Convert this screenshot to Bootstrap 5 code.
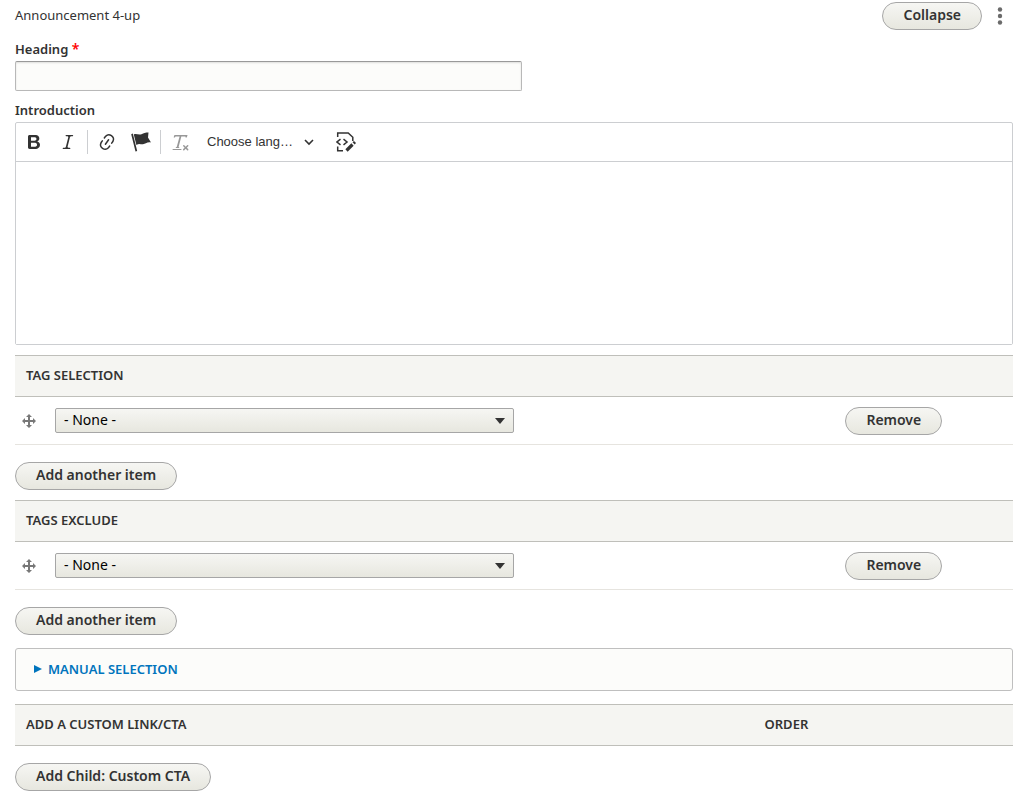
<!DOCTYPE html>
<html lang="en">
<head>
<meta charset="utf-8">
<meta name="viewport" content="width=device-width, initial-scale=1">
<title>Announcement 4-up</title>
<link href="https://cdn.jsdelivr.net/npm/bootstrap@5.3.0/dist/css/bootstrap.min.css" rel="stylesheet">
<style>
  body { font-family: "Noto Sans", "Open Sans", sans-serif; font-size: 13px; line-height: 20px; color: #333; }
  .page { padding: 2px 14px 16px 15px; }
  .page-head { padding-right: 3px; }
  .title-text { padding-bottom: 2px; }
  .field-block { margin-top: 9px; }
  .field-label { display: block; margin-bottom: 2px; font-weight: 600; line-height: 20px; }
  .required-mark { color: #f00; font-size: 14px; line-height: 16px; }
  .pill { display: block; width: fit-content; height: 28px; padding: 0 20px 2px; border: 1px solid #a6a6a6; border-radius: 14px; background: linear-gradient(#f6f6f3, #e7e7df); color: #333; font-size: 14px; font-weight: 600; line-height: 24px; }
  .pill:hover { background: #f9f8f6; color: #1a1a1a; }
  .add-item { margin-top: 17px; }
  .more-btn { width: 20px; height: 28px; }
  .text-field { width: 100%; max-width: 507px; height: 30px; border: 1px solid #b8b8b8; border-top-color: #999; border-radius: 2px; background: #fcfcfa; box-shadow: inset 0 1px 2px rgba(0,0,0,.12); padding: 4px 8px; }
  .editor { border: 1px solid #ccced1; border-radius: 2px; }
  .editor-bar { height: 39px; padding: 0 4px; border-bottom: 1px solid #ccced1; }
  .tool { width: 28px; height: 28px; }
  .tool + .tool { margin-left: 6px; }
  .tool:disabled { opacity: .5; }
  .tool svg { width: 20px; height: 20px; }
  .tool-sep { width: 1px; height: 24px; margin: 0 5px; background: #ccced1; }
  .lang-pick { appearance: none; width: 123px; height: 28px; margin: 0 10px 0 5px; border: 0; padding: 0 24px 2px 8px; color: #333; font: 13px "Liberation Sans", sans-serif; background: url("data:image/svg+xml,%3Csvg xmlns='http://www.w3.org/2000/svg' viewBox='0 0 10 10'%3E%3Cpath d='M1 3l4 4 4-4' fill='none' stroke='%23333' stroke-width='1.6'/%3E%3C/svg%3E") no-repeat right 8px center / 10px; }
  .editor-text { display: block; width: 100%; height: 182px; border: 0; resize: none; padding: 8px; }
  .field-table { width: 100%; margin-top: 10px; table-layout: fixed; border-collapse: collapse; }
  .field-table th { height: 41px; padding: 0 11px 2px; border-top: 1px solid #bfbfba; border-bottom: 1px solid #bfbfba; background: #f5f5f2; font-weight: 600; text-transform: uppercase; }
  .field-table td { height: 48px; padding: 0 12px; border-bottom: 1px solid #e6e4df; vertical-align: middle; }
  .field-table td.handle { padding: 0 7px; }
  .field-table td.choice { padding: 0; }
  .col-handle { width: 40px; }
  .col-action { width: 18%; }
  .col-order { width: 26%; }
  .tag-select { appearance: none; display: block; width: 59%; height: 25px; padding: 0 24px 2px 8px; border: 1px solid #a6a6a6; border-radius: 2px; color: #000; font-size: 14px; line-height: 20px; background: url("data:image/svg+xml,%3Csvg xmlns='http://www.w3.org/2000/svg' viewBox='0 0 10 6'%3E%3Cpath d='M0 0h10L5 6z' fill='%23333'/%3E%3C/svg%3E") no-repeat right 8px center / 10px 6px, linear-gradient(#f6f6f3, #e7e7df); }
  .manual { margin: 13px 0; border: 1px solid #bfbfbf; border-radius: 3px; background: #fcfcfa; }
  .manual summary { list-style: none; height: 41px; padding: 0 18px 2px; gap: 6px; color: #0074bd; font-weight: 600; text-transform: uppercase; }
</style>
</head>
<body>
<main class="page">
  <header class="page-head d-flex align-items-center justify-content-between">
    <span class="title-text">Announcement 4-up</span>
    <div class="d-flex align-items-center gap-2">
      <button type="button" class="pill">Collapse</button>
      <button type="button" class="more-btn btn p-0 border-0 d-flex align-items-center justify-content-center" aria-label="More actions">
        <svg width="6" height="20" viewBox="0 0 6 20" fill="#6b6b6b"><circle cx="3" cy="3.500" r="2.200"/><circle cx="3" cy="10" r="2.200"/><circle cx="3" cy="16.500" r="2.200"/></svg>
      </button>
    </div>
  </header>

  <div class="field-block">
    <label class="field-label" for="heading">Heading <span class="required-mark">*</span></label>
    <input id="heading" class="text-field d-block" type="text" required>
  </div>

  <div class="field-block">
    <label class="field-label" for="intro">Introduction</label>
    <div class="editor">
      <div class="editor-bar d-flex align-items-center" role="toolbar" aria-label="Editor toolbar">
        <button type="button" class="tool btn p-0 border-0 d-flex align-items-center justify-content-center" aria-label="Bold"><svg viewBox="0 0 20 20" fill="#333"><path d="M10.187 17H5.773c-.637 0-1.092-.138-1.364-.415-.273-.277-.409-.718-.409-1.323V4.738c0-.617.14-1.062.419-1.332.279-.27.73-.406 1.354-.406h4.68c.69 0 1.288.041 1.793.124.506.083.96.242 1.36.478.341.197.644.447.906.75a3.262 3.262 0 0 1 .808 2.162c0 1.401-.722 2.426-2.167 3.075C15.05 10.175 16 11.315 16 13.01a3.756 3.756 0 0 1-2.296 3.504 6.1 6.1 0 0 1-1.517.377c-.571.073-1.238.11-2 .11zm-.217-6.217H7v4.087h3.069c1.977 0 2.965-.69 2.965-2.072 0-.707-.256-1.22-.768-1.537-.512-.319-1.277-.478-2.296-.478zM7 5.13v3.619h2.606c.729 0 1.292-.067 1.69-.2a1.6 1.6 0 0 0 .91-.765c.165-.267.247-.566.247-.897 0-.707-.26-1.176-.778-1.409-.519-.232-1.31-.348-2.375-.348H7z"/></svg></button>
        <button type="button" class="tool btn p-0 border-0 d-flex align-items-center justify-content-center" aria-label="Italic"><svg viewBox="0 0 20 20" fill="#333"><path d="m9.586 14.633.021.004c-.036.335.095.655.393.962.082.083.173.15.274.201h1.474a.6.6 0 1 1 0 1.2H5.304a.6.6 0 0 1 0-1.2h1.15c.474-.07.809-.182 1.005-.334.157-.122.291-.32.404-.597l2.416-9.55a1.053 1.053 0 0 0-.281-.823 1.12 1.12 0 0 0-.442-.296H8.15a.6.6 0 0 1 0-1.2h6.443a.6.6 0 1 1 0 1.2h-1.195c-.376.056-.65.155-.823.296-.215.175-.423.439-.623.79l-2.366 9.347z"/></svg></button>
        <span class="tool-sep"></span>
        <button type="button" class="tool btn p-0 border-0 d-flex align-items-center justify-content-center" aria-label="Link"><svg viewBox="0 0 20 20" fill="#333"><path d="m11.077 15 .991-1.416a.75.75 0 1 1 1.229.86l-1.148 1.64a.748.748 0 0 1-.217.206 5.251 5.251 0 0 1-8.503-5.955.741.741 0 0 1 .12-.274l1.147-1.639a.75.75 0 1 1 1.228.86L4.933 10.7l.006.003a3.75 3.75 0 0 0 6.132 4.294l.006.004zm5.494-5.335a.748.748 0 0 1-.12.274l-1.147 1.639a.75.75 0 1 1-1.228-.86l.86-1.23a3.75 3.75 0 0 0-6.144-4.301l-.86 1.229a.75.75 0 0 1-1.229-.86l1.148-1.64a.748.748 0 0 1 .217-.206 5.251 5.251 0 0 1 8.503 5.955zm-4.563-2.532a.75.75 0 0 1 .184 1.045l-3.155 4.505a.75.75 0 1 1-1.229-.86l3.155-4.506a.75.75 0 0 1 1.045-.184z"/></svg></button>
        <button type="button" class="tool btn p-0 border-0 d-flex align-items-center justify-content-center" aria-label="Anchor"><svg viewBox="0 0 20 20" fill="#333"><path d="M.2 2.200l1.600-.6L6.200 19l-1.700.4zM2.800 2.500C5 1 7.500 3.400 10.500 2.200 12.500 1.200 14.500.600 17.500.600L17 5.500l3 5c-4-.8-5.500 1.600-8 1.800-2.300.2-4-1-6.600.6z"/></svg></button>
        <span class="tool-sep"></span>
        <button type="button" class="tool btn p-0 border-0 d-flex align-items-center justify-content-center" aria-label="Remove format" disabled><svg viewBox="0 0 20 20" fill="#333"><path d="M8.69 14.915c.053.052.173.083.36.093a.366.366 0 0 1 .345.485l-.003.01a.738.738 0 0 1-.697.497h-2.67a.374.374 0 0 1-.353-.496l.013-.038a.681.681 0 0 1 .644-.458c.197-.012.325-.043.386-.093a.28.28 0 0 0 .072-.11L9.592 4.5H6.269c-.359-.017-.609.013-.75.09-.142.078-.289.265-.442.563-.192.29-.516.464-.864.464H4.17a.43.43 0 0 1-.407-.569L4.46 3h13.08l-.62 2.043a.81.81 0 0 1-.775.574h-.114a.486.486 0 0 1-.486-.486c.001-.284-.054-.464-.167-.54-.112-.076-.367-.106-.766-.091h-3.28l-2.68 10.257c-.006.074.007.127.038.158zM3 17h8a.5.5 0 1 1 0 1H3a.5.5 0 1 1 0-1zm11.299 1.170a.75.75 0 1 1-1.060-1.060l1.414-1.415-1.415-1.414a.75.75 0 0 1 1.060-1.060l1.415 1.414 1.414-1.415a.75.75 0 1 1 1.060 1.060l-1.413 1.415 1.414 1.415a.75.75 0 0 1-1.060 1.060l-1.415-1.414-1.414 1.414z"/></svg></button>
        <select class="lang-pick" aria-label="Choose language"><option>Choose lang…</option></select>
        <button type="button" class="tool btn p-0 border-0 d-flex align-items-center justify-content-center" aria-label="Source"><svg viewBox="0 0 20 20" fill="none" stroke="#333" stroke-width="1.500"><path d="M1.700 5V1h10.500l4.600 4.300V9M1.700 14.500v4.300H7"/><path d="M4.500 7.200L1 10l3.500 2.800M7.500 7.200L11 10l-3.500 2.800"/><path d="M10.500 18.500l6-6" stroke-width="3.200"/><path d="M17.600 11.400l1.400-1.400" stroke-width="3"/></svg></button>
      </div>
      <textarea id="intro" class="editor-text"></textarea>
    </div>
  </div>

  <table class="field-table">
    <colgroup><col class="col-handle"><col><col class="col-action"></colgroup>
    <thead><tr><th colspan="3">Tag selection</th></tr></thead>
    <tbody><tr>
      <td class="handle"><svg class="d-block" width="14" height="14" viewBox="0 0 14 14" fill="#787878"><path d="M7 0l3 3H8v3h3V4l3 3-3 3V8H8v3h2l-3 3-3-3h2V8H3v2L0 7l3-3v2h3V3H4z"/></svg></td>
      <td class="choice"><select class="tag-select" aria-label="Tag selection"><option>- None -</option></select></td>
      <td><button type="button" class="pill">Remove</button></td>
    </tr></tbody>
  </table>
  <button type="button" class="pill add-item">Add another item</button>

  <table class="field-table">
    <colgroup><col class="col-handle"><col><col class="col-action"></colgroup>
    <thead><tr><th colspan="3">Tags exclude</th></tr></thead>
    <tbody><tr>
      <td class="handle"><svg class="d-block" width="14" height="14" viewBox="0 0 14 14" fill="#787878"><path d="M7 0l3 3H8v3h3V4l3 3-3 3V8H8v3h2l-3 3-3-3h2V8H3v2L0 7l3-3v2h3V3H4z"/></svg></td>
      <td class="choice"><select class="tag-select" aria-label="Tags exclude"><option>- None -</option></select></td>
      <td><button type="button" class="pill">Remove</button></td>
    </tr></tbody>
  </table>
  <button type="button" class="pill add-item">Add another item</button>

  <details class="manual">
    <summary class="d-flex align-items-center"><svg width="8" height="8" viewBox="0 0 8 8" fill="#0074bd"><path d="M0 0l8 4-8 4z"/></svg><span>Manual selection</span></summary>
  </details>

  <table class="field-table">
    <colgroup><col><col class="col-order"></colgroup>
    <thead><tr><th>Add a custom link/CTA</th><th>Order</th></tr></thead>
  </table>
  <button type="button" class="pill add-item">Add Child: Custom CTA</button>
</main>
<script src="https://cdn.jsdelivr.net/npm/bootstrap@5.3.0/dist/js/bootstrap.bundle.min.js"></script>
</body>
</html>
